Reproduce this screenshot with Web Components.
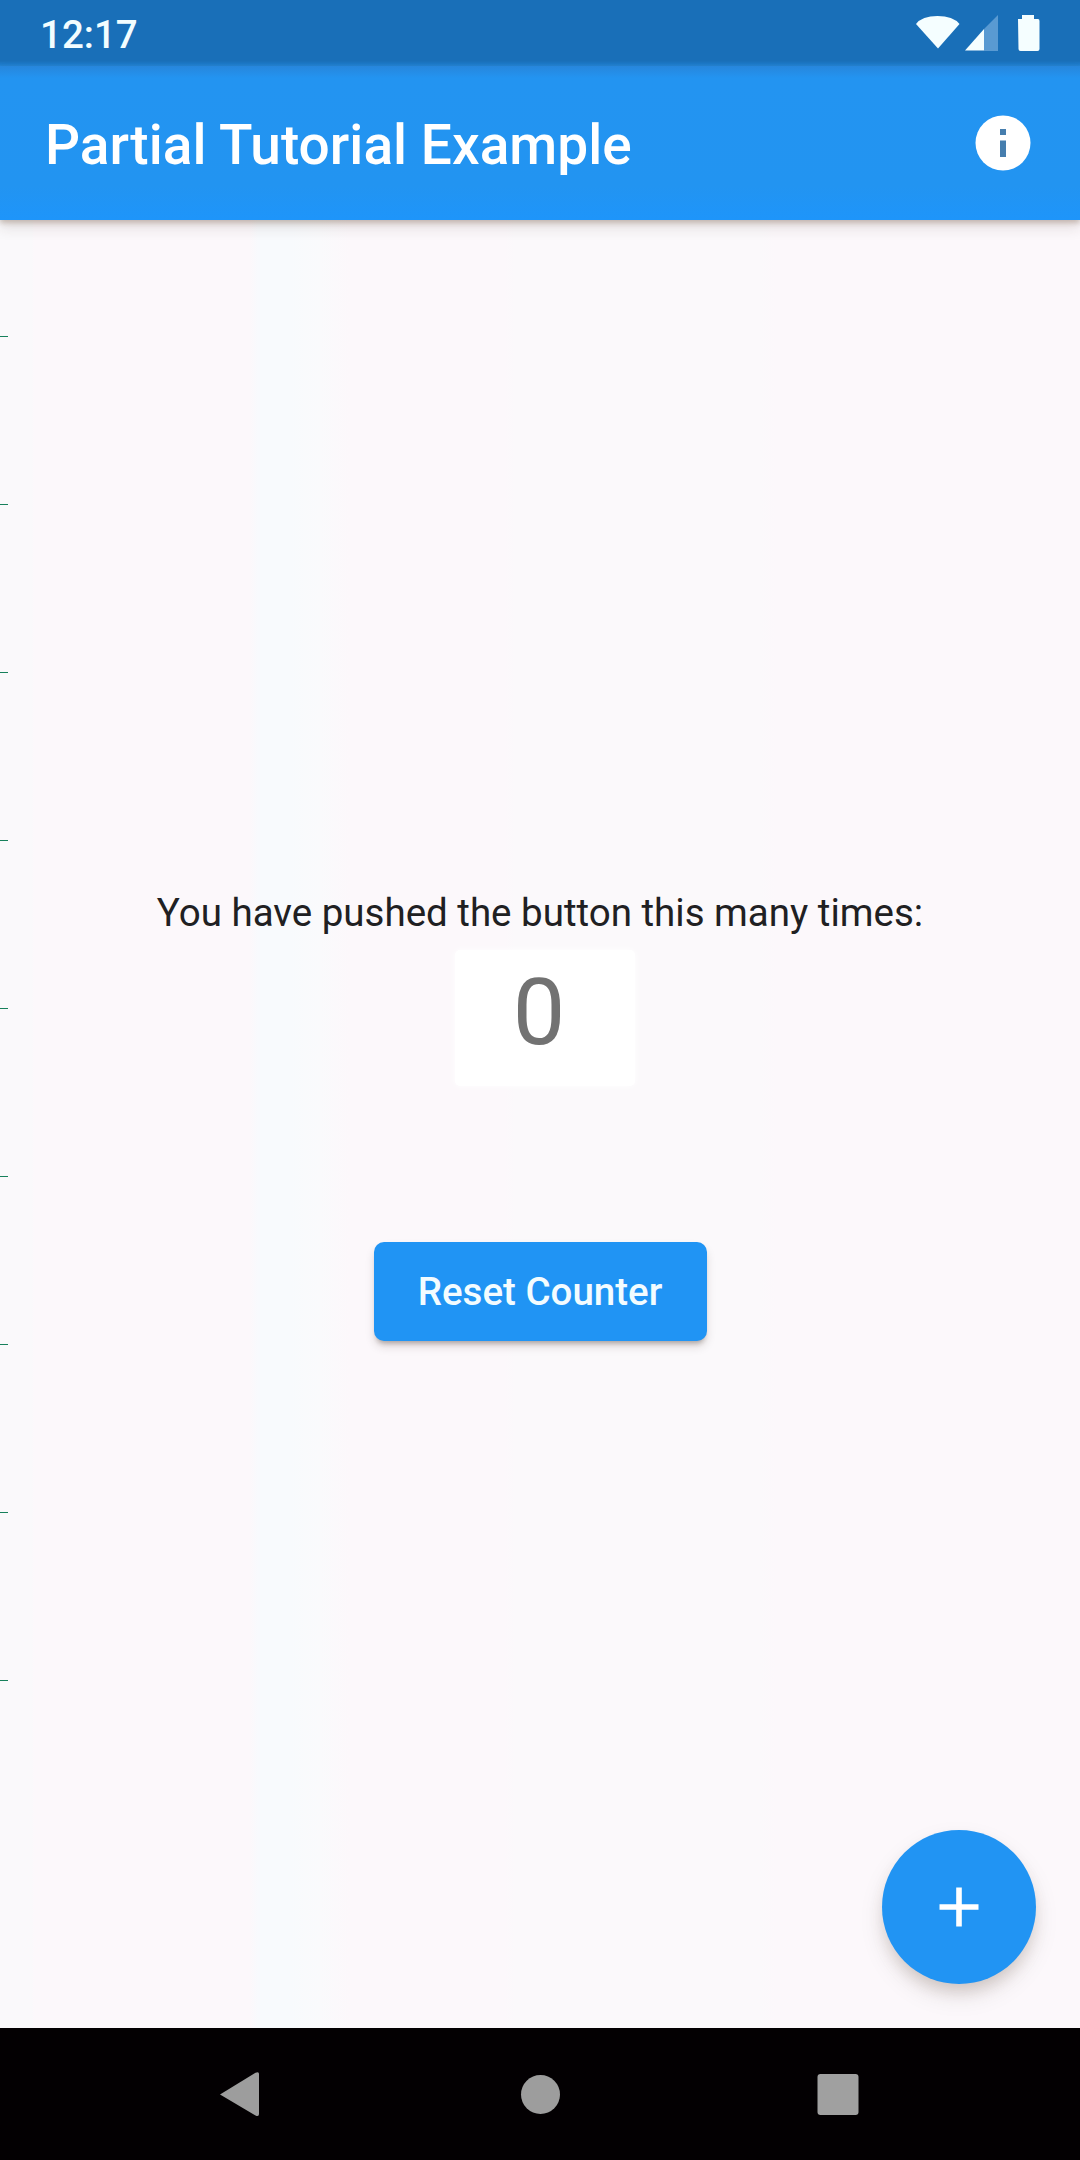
<!DOCTYPE html>
<html lang="en">
<head>
<meta charset="utf-8">
<title>Partial Tutorial Example</title>
<style>
html,body{margin:0;padding:0;width:1080px;height:2160px;overflow:hidden;font-family:Roboto,"Liberation Sans",sans-serif}
</style>
</head>
<body>
<counter-app></counter-app>
<script>
function define(name, html) {
  const template = document.createElement('template');
  template.innerHTML = html;
  customElements.define(name, class extends HTMLElement {
    constructor() {
      super();
      this.attachShadow({mode: 'open'}).appendChild(template.content.cloneNode(true));
    }
  });
}

define('status-bar', `
<style>
:host{display:flex;box-sizing:border-box;height:66px;padding:0 38px 0 40px;justify-content:space-between;align-items:flex-start;background:linear-gradient(#196fb8 61px,#1e7bca 64px,#2485d6 66px);color:#f2fdff}
.time{font-size:38.5px;font-weight:500;line-height:45px;padding-top:12px}
svg{display:block}
</style>
<span class="time"><slot></slot></span>
<svg width="130" height="66" viewBox="912 0 130 66">
  <path d="M916 24Q922 16 937.500 16Q953 16 959.500 24L938 48.500Z" fill="#f5feff"/>
  <path d="M998 15V51H984V29Z" fill="#72aadc" opacity=".72"/>
  <path d="M965 50.500L984 29V50.500Z" fill="#f5feff"/>
  <path d="M1018 19H1022V15H1034V19H1038Q1039.500 19 1039.500 21V49Q1039.500 51 1037.500 51H1020.500Q1018.500 51 1018.500 49Z" fill="#f5feff"/>
</svg>`);

define('app-bar', `
<style>
:host{display:flex;box-sizing:border-box;height:154px;padding:0 49px 0 45px;justify-content:space-between;align-items:center;color:#fff;background:linear-gradient(#2786dc 0,#2394f1 12px,#2294f1 120px,#1e95fa 100%);position:relative;z-index:1;box-shadow:0 3px 5px rgba(105,70,40,.27),0 8px 13px rgba(60,40,30,.12)}
h1{margin:0;padding-top:4px;font-size:55px;line-height:64px;font-weight:500;letter-spacing:.04px;white-space:nowrap}
svg{display:block}
</style>
<h1><slot></slot></h1>
<svg width="56" height="56" viewBox="0 0 56 56"><circle cx="28" cy="28" r="27.500" fill="#fff"/><path d="M25 14h6v6h-6zM25 25.500h6V42h-6z" fill="#467eae"/></svg>`);

define('ruler-rail', `
<style>
:host{display:flex;flex-direction:column;gap:167px;padding-top:116px;width:8px}
i{display:block;height:1px;background:#16805b}
</style>
<i></i><i></i><i></i><i></i><i></i><i></i><i></i><i></i><i></i>`);

define('push-caption', `
<style>:host{display:block;font-size:38.5px;line-height:45px;color:#202022;white-space:nowrap}</style>
<slot></slot>`);

define('counter-value', `
<style>
:host{display:block;box-sizing:border-box;width:180px;height:136px;margin:15px 0 0 10px;padding:7px 12px 0 0;text-align:center;font-size:93.5px;line-height:110px;color:#727272;background:#fff;border-radius:5px;box-shadow:0 0 7px #fff}
</style>
<slot></slot>`);

define('raised-button', `
<style>
:host{display:block;margin-top:156px}
button{display:flex;box-sizing:border-box;width:333px;height:99px;border:0;border-radius:10px;padding:0;align-items:center;justify-content:center;background:#2094f4;color:#f3fcff;font:500 38.5px/45px Roboto,sans-serif;box-shadow:0 5px 5px -3px rgba(50,30,20,.32),0 6px 10px rgba(50,30,20,.13)}
</style>
<button><slot></slot></button>`);

define('add-button', `
<style>
:host{display:block;align-self:end;justify-self:end;margin:0 44px 44px 0}
button{display:grid;place-items:center;width:154px;height:154px;border:0;border-radius:50%;padding:0;background:#2194f3;box-shadow:0 10px 16px -3px rgba(80,50,30,.2),0 12px 26px rgba(60,50,40,.09)}
</style>
<button aria-label="Add"><svg width="40" height="40" viewBox="0 0 40 40"><path d="M20 .500V39.500M.500 20H39.500" stroke="#fff" stroke-width="5.600"/></svg></button>`);

define('nav-bar', `
<style>
:host{display:flex;box-sizing:border-box;height:132px;padding:43px 221px 0 218px;justify-content:space-between;align-items:flex-start;background:#030002}
svg{display:block}
</style>
<svg width="42" height="46" viewBox="0 0 42 46"><path d="M2 23.500L37.500 1.800Q41 0 41 3V43Q41 46 37.500 44.500Z" fill="#9d9d9d"/></svg>
<svg width="42" height="46" viewBox="0 0 42 46"><circle cx="22.500" cy="23.500" r="19.500" fill="#9d9d9d"/></svg>
<svg width="42" height="46" viewBox="0 0 42 46"><rect x=".500" y="3" width="41" height="41" rx="3" fill="#a0a0a0"/></svg>`);

define('counter-app', `
<style>
:host{display:flex;flex-direction:column;width:1080px;height:2160px}
main{flex:1;display:grid;grid-template:100%/100%;background:linear-gradient(90deg,#faf9fb 0 32px,#fcf8fb 34px 250px,#f8fafd 258px 290px,#fafafc 320px,#fcf8fb 350px 505px,#fbf9fb 515px 760px,#fcf8fb 775px 100%)}
main>*{grid-area:1/1}
.center{display:flex;flex-direction:column;align-items:center;padding-top:670px}
</style>
<status-bar>12:17</status-bar>
<app-bar>Partial Tutorial Example</app-bar>
<main>
  <ruler-rail></ruler-rail>
  <div class="center">
    <push-caption>You have pushed the button this many times:</push-caption>
    <counter-value>0</counter-value>
    <raised-button>Reset Counter</raised-button>
  </div>
  <add-button></add-button>
</main>
<nav-bar></nav-bar>`);
</script>
</body>
</html>
